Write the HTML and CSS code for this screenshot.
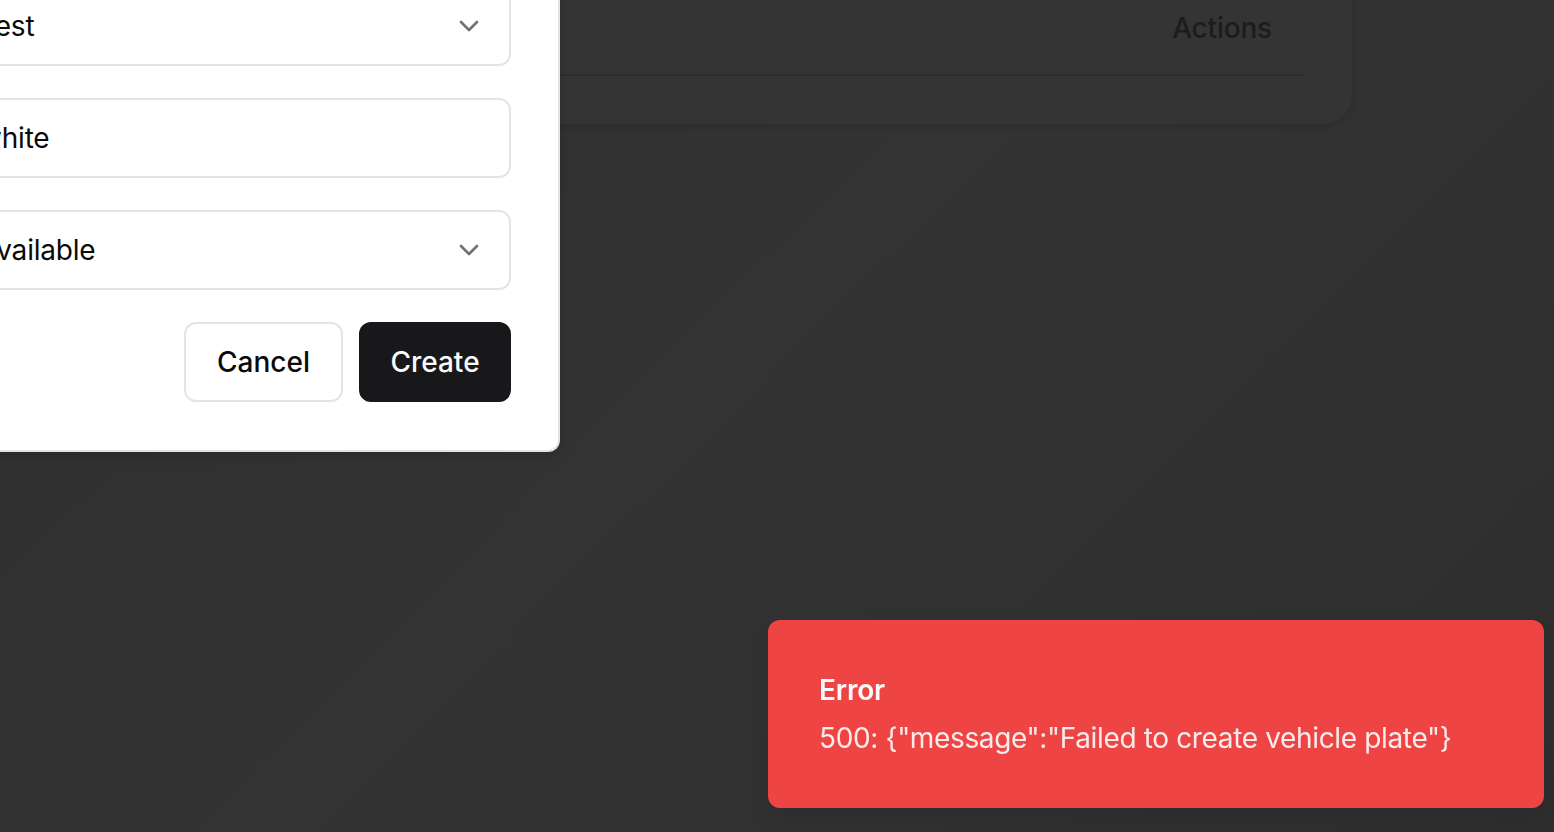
FILE: index.html
```html
<!DOCTYPE html>
<html lang="en">
<head>
<meta charset="utf-8">
<title>Vehicle plates</title>
<link rel="stylesheet" href="styles.css">
</head>
<body>
  <main class="page">
    <section class="card">
      <div class="table-head">
        <span class="th">Actions</span>
      </div>
    </section>
  </main>

  <div class="modal">
    <form class="form">
      <div class="field select">
        <span class="value">Test</span>
        <svg class="chev" viewBox="0 0 24 24" fill="none" stroke="currentColor" stroke-width="2" stroke-linecap="round" stroke-linejoin="round"><path d="m6 9 6 6 6-6"/></svg>
      </div>
      <div class="field">
        <span class="value">white</span>
      </div>
      <div class="field select">
        <span class="value">Available</span>
        <svg class="chev" viewBox="0 0 24 24" fill="none" stroke="currentColor" stroke-width="2" stroke-linecap="round" stroke-linejoin="round"><path d="m6 9 6 6 6-6"/></svg>
      </div>
      <div class="actions">
        <button type="button" class="btn btn-outline">Cancel</button>
        <button type="button" class="btn btn-primary">Create</button>
      </div>
    </form>
  </div>

  <div class="toast">
    <div class="toast-title">Error</div>
    <div class="toast-desc">500: {"message":"Failed to create vehicle plate"}</div>
  </div>
</body>
</html>
```

FILE: styles.css
```css
* { box-sizing: border-box; }

html, body {
  margin: 0;
  height: 100%;
}

body {
  overflow: hidden;
  font-family: Inter, "Noto Sans", "Liberation Sans", sans-serif;
  background: linear-gradient(135deg, #2f2f2f 0%, #333333 45%, #323232 60%, #2e2e2e 100%);
  color: #0a0a0a;
}

.page {
  display: flex;
}

.card {
  margin-left: -200px;
  margin-top: -20px;
  width: 1552px;
  padding: 0 48px 48px;
  background: #343434;
  border-radius: 0 0 28px 28px;
  box-shadow: 0 3px 6px rgba(0, 0, 0, 0.12);
}

.table-head {
  height: 96px;
  border-bottom: 2px solid #2d2d2d;
  display: flex;
  align-items: center;
  justify-content: flex-end;
  padding: 0 32px 0 0;
}

.th {
  font-size: 28px;
  font-weight: 500;
  color: #1c1c1c;
  line-height: 40px;
  letter-spacing: -0.2px;
  position: relative;
  top: 1px;
}

.modal {
  position: absolute;
  left: -95px;
  top: -62px;
  width: 655px;
  background: #ffffff;
  border: 2px solid #e4e4e7;
  border-top: 0;
  border-left: 0;
  border-radius: 0 0 12px 0;
  padding: 48px 47px 48px 48px;
  box-shadow: 0 4px 12px rgba(0, 0, 0, 0.15);
}

.form {
  display: flex;
  flex-direction: column;
  gap: 32px;
}

.field {
  height: 80px;
  border: 2px solid #e4e4e7;
  border-radius: 12px;
  display: flex;
  align-items: center;
  justify-content: space-between;
  padding: 0 24px;
  font-size: 28px;
  color: #0a0a0a;
  background: #fff;
}

.value {
  line-height: 40px;
  letter-spacing: -0.2px;
}

.chev {
  width: 32px;
  height: 32px;
  color: #737373;
  flex: none;
}

.actions {
  display: flex;
  justify-content: flex-end;
  gap: 16px;
}

.btn {
  height: 80px;
  border-radius: 12px;
  font-family: inherit;
  font-size: 28px;
  font-weight: 500;
  padding: 0 24px;
  cursor: pointer;
}

.btn-outline {
  background: #fff;
  border: 2px solid #e4e4e7;
  color: #0a0a0a;
  width: 159px;
}

.btn-primary {
  background: #18181b;
  border: 2px solid #18181b;
  color: #fafafa;
  width: 152px;
}

.toast {
  position: fixed;
  right: 10px;
  bottom: 24px;
  width: 776px;
  background: #ef4444;
  border: 2px solid #ef4444;
  border-radius: 12px;
  padding: 48px 64px 48px 49px;
  display: flex;
  flex-direction: column;
  gap: 8px;
  color: #fafafa;
  box-shadow: 0 8px 20px rgba(0, 0, 0, 0.1);
}

.toast-title {
  font-size: 28px;
  line-height: 40px;
  font-weight: 600;
  letter-spacing: -0.2px;
}

.toast-desc {
  font-size: 28px;
  line-height: 40px;
  opacity: 0.92;
  letter-spacing: -0.35px;
}
```
